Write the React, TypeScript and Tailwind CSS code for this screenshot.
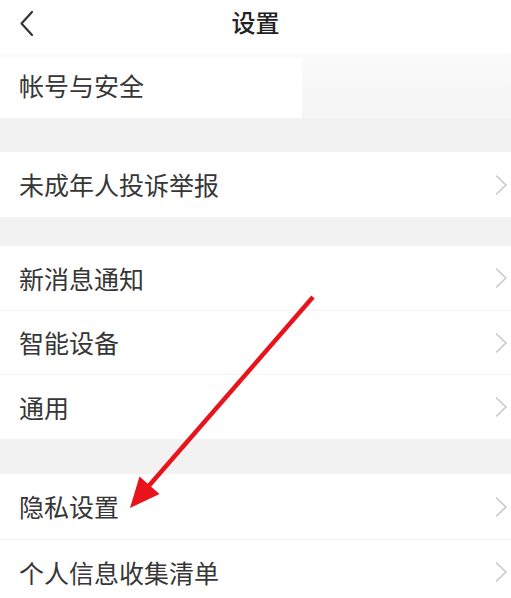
import React from "react";

const Chevron = () => (
  <svg width="15" height="22" viewBox="0 0 15 22" className="shrink-0">
    <path d="M2.5 2 L12 11 L2.5 20" fill="none" stroke="#c8c8c8" strokeWidth="1.6" strokeLinecap="round" strokeLinejoin="round" />
  </svg>
);

const Row = ({ label, h = "h-[65px]", border = false }: { label: string; h?: string; border?: boolean }) => (
  <div className={`${h} shrink-0 bg-white flex items-center pl-[19px] pr-[2px] ${border ? "border-t border-[#f3f3f3]" : ""}`}>
    <span className="flex-1 text-[25px] leading-none text-[#363636]">{label}</span>
    <Chevron />
  </div>
);

export default function App() {
  return (
    <div
      className="relative w-[511px] h-[598px] overflow-hidden bg-[#f2f2f2] flex flex-col"
      style={{ fontFamily: '"Noto Sans CJK SC", "Noto Sans", sans-serif' }}
    >
      <div className="h-[53px] shrink-0 bg-white relative flex items-center justify-center pb-[9px]">
        <svg width="20" height="30" viewBox="0 0 20 30" className="absolute left-[17px] top-[9px]">
          <path d="M15 3 L4.5 14.5 L15 26" fill="none" stroke="#333" strokeWidth="2.2" strokeLinecap="round" strokeLinejoin="round" />
        </svg>
        <span className="text-[24px] font-medium text-[#222222] leading-none">设置</span>
      </div>

      <div className="h-[65px] shrink-0 flex">
        <div className="w-[302px] flex flex-col">
          <div className="h-[5px] bg-[#fbfbfb]" />
          <div className="flex-1 bg-white flex items-center pl-[19px] pb-[6px]">
            <span className="text-[25px] leading-none text-[#363636]">帐号与安全</span>
          </div>
        </div>
        <div className="flex-1 bg-gradient-to-b from-[#fbfbfb] via-[#f8f8f8] to-[#f5f5f5]" />
      </div>

      <div className="h-[34px] shrink-0" />
      <Row label="未成年人投诉举报" />
      <div className="h-[29px] shrink-0" />
      <Row label="新消息通知" h="h-[64px]" />
      <Row label="智能设备" h="h-[64px]" border />
      <Row label="通用" h="h-[65px]" border />
      <div className="h-[35px] shrink-0" />
      <Row label="隐私设置" />
      <Row label="个人信息收集清单" border />

      <svg className="absolute left-0 top-0 pointer-events-none" width="511" height="598" viewBox="0 0 511 598">
        <line x1="313" y1="297" x2="147" y2="488" stroke="#e8131b" strokeWidth="4.5" strokeLinecap="butt" />
        <polygon points="130,508 139.5,476.5 159.5,494" fill="#e8131b" />
      </svg>
    </div>
  );
}
